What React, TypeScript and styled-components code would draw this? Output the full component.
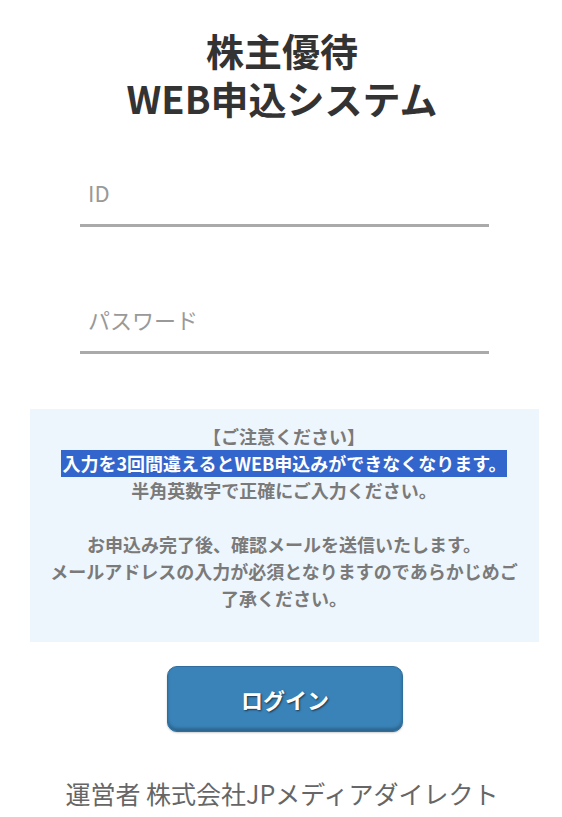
import React from 'react'
import styled, { createGlobalStyle } from 'styled-components'

const GlobalStyle = createGlobalStyle`
  html, body {
    margin: 0;
    padding: 0;
    background: #fff;
  }
  body {
    font-family: "Noto Sans CJK JP", "Noto Sans", sans-serif;
  }
`

const S = {
  Page: styled.div`
    width: 562px;
    display: flex;
    flex-direction: column;
    align-items: center;
    padding-top: 26px;
  `,

  Title: styled.h1`
    margin: 0;
    font-size: 38px;
    font-weight: 700;
    color: #333;
    text-align: center;
    padding-left: 2px;
  `,

  TitleLine: styled.span`
    display: block;
    height: 48px;
    line-height: 48px;
  `,

  Form: styled.form`
    width: 409px;
    margin: 48px 0 0 7px;
    display: flex;
    flex-direction: column;
    gap: 70px;
  `,

  Field: styled.input`
    display: block;
    width: 100%;
    height: 57px;
    box-sizing: border-box;
    border: none;
    border-bottom: 3px solid #aaa;
    padding: 0 8px 10px;
    font-family: "Noto Sans CJK JP", "Noto Sans", sans-serif;
    font-size: 22px;
    color: #555;
    outline: none;
    background: transparent;

    &::placeholder {
      color: #999;
    }
  `,

  Notice: styled.div`
    width: 509px;
    box-sizing: border-box;
    margin: 55px 0 0 6px;
    padding: 14px 20px 30px;
    background: #eef6fd;
    text-align: center;
    font-size: 18px;
    line-height: 27px;
    font-weight: 700;
    color: #7a7a7a;

    p {
      margin: 0;
    }
  `,

  Mark: styled.span`
    display: inline-block;
    background: #3366cc;
    color: #fff;
    padding-left: 1px;
  `,

  Spacer: styled.div`
    height: 27px;
  `,

  LoginButton: styled.button`
    margin: 24px 0 0 8px;
    width: 236px;
    height: 66px;
    border-radius: 10px;
    border: 1px solid #2f6e9c;
    background: #3a83b8;
    box-shadow: inset 0 -3px 3px rgba(0, 0, 0, 0.22), 0 1px 2px rgba(0, 0, 0, 0.2);
    color: #fff;
    font-family: "Noto Sans CJK JP", "Noto Sans", sans-serif;
    font-size: 22px;
    font-weight: 700;
    text-shadow: 1px 1px 2px rgba(0, 0, 0, 0.6);
    cursor: pointer;
  `,

  Footer: styled.div`
    margin-top: 44px;
    font-size: 25px;
    line-height: 34px;
    color: #666;
    padding-left: 2px;
  `
}

const App = () => {
  return (
    <>
      <GlobalStyle />
      <S.Page>
        <S.Title>
          <S.TitleLine>株主優待</S.TitleLine>
          <S.TitleLine>WEB申込システム</S.TitleLine>
        </S.Title>
        <S.Form onSubmit={e => e.preventDefault()}>
          <S.Field type="text" placeholder="ID" />
          <S.Field type="password" placeholder="パスワード" />
        </S.Form>
        <S.Notice>
          <p>【ご注意ください】</p>
          <p>
            <S.Mark>入力を3回間違えるとWEB申込みができなくなります。</S.Mark>
          </p>
          <p>半角英数字で正確にご入力ください。</p>
          <S.Spacer />
          <p>お申込み完了後、確認メールを送信いたします。</p>
          <p>メールアドレスの入力が必須となりますのであらかじめご了承ください。</p>
        </S.Notice>
        <S.LoginButton type="button">ログイン</S.LoginButton>
        <S.Footer>運営者 株式会社JPメディアダイレクト</S.Footer>
      </S.Page>
    </>
  )
}

export default App
